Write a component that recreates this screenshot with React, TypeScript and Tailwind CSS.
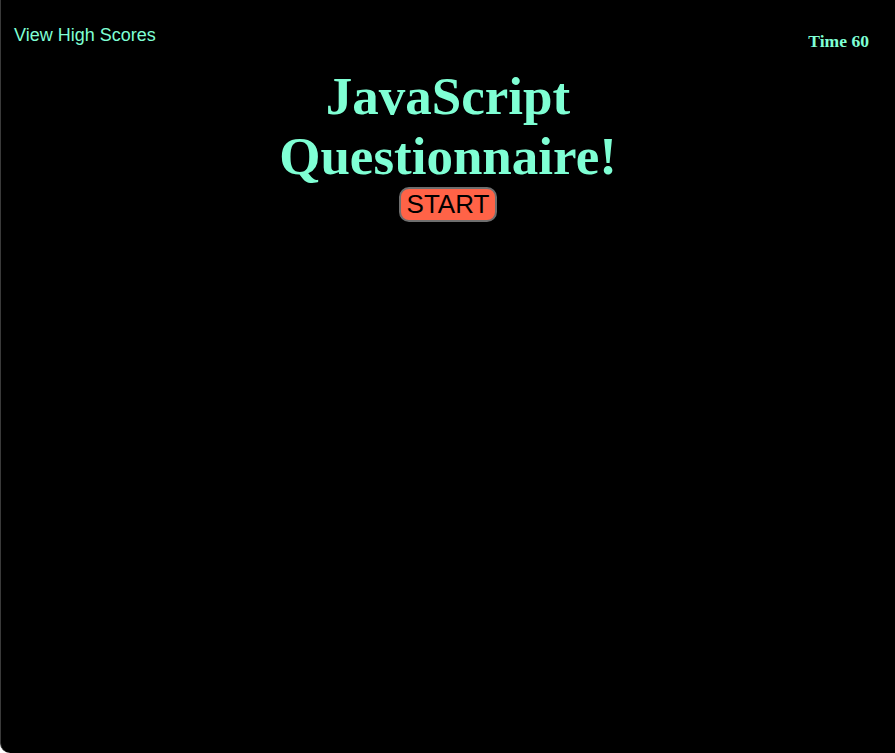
const App = () => {
    return (
        <div className="h-[753px] w-full bg-black border-l border-[#3a3a3a] rounded-bl-[10px] overflow-hidden">
            <header className="flex items-start justify-between">
                <a className="mt-[22px] ml-[13px] text-[18px] text-[#7fffd4] font-['Liberation_Sans',Arial,sans-serif] cursor-pointer">
                    View High Scores
                </a>
                <div className="mt-[28px] mr-[26px] text-[17.6px] font-bold text-[#7fffd4] font-['Liberation_Serif','Times_New_Roman',serif]">
                    Time 60
                </div>
            </header>
            <main className="flex flex-col items-center mt-[12px]">
                <h1 className="w-[420px] text-center text-[53px] font-bold leading-[60px] text-[#7fffd4] font-['Liberation_Serif','Times_New_Roman',serif]">
                    JavaScript Questionnaire!
                </h1>
                <button className="mt-[1px] px-[6px] bg-[#ff6347] border-2 border-[#6e6e6e] rounded-[10px] text-[26px] leading-[31px] text-black font-['Liberation_Sans',Arial,sans-serif]">
                    START
                </button>
            </main>
        </div>
    );
};

export default App;
